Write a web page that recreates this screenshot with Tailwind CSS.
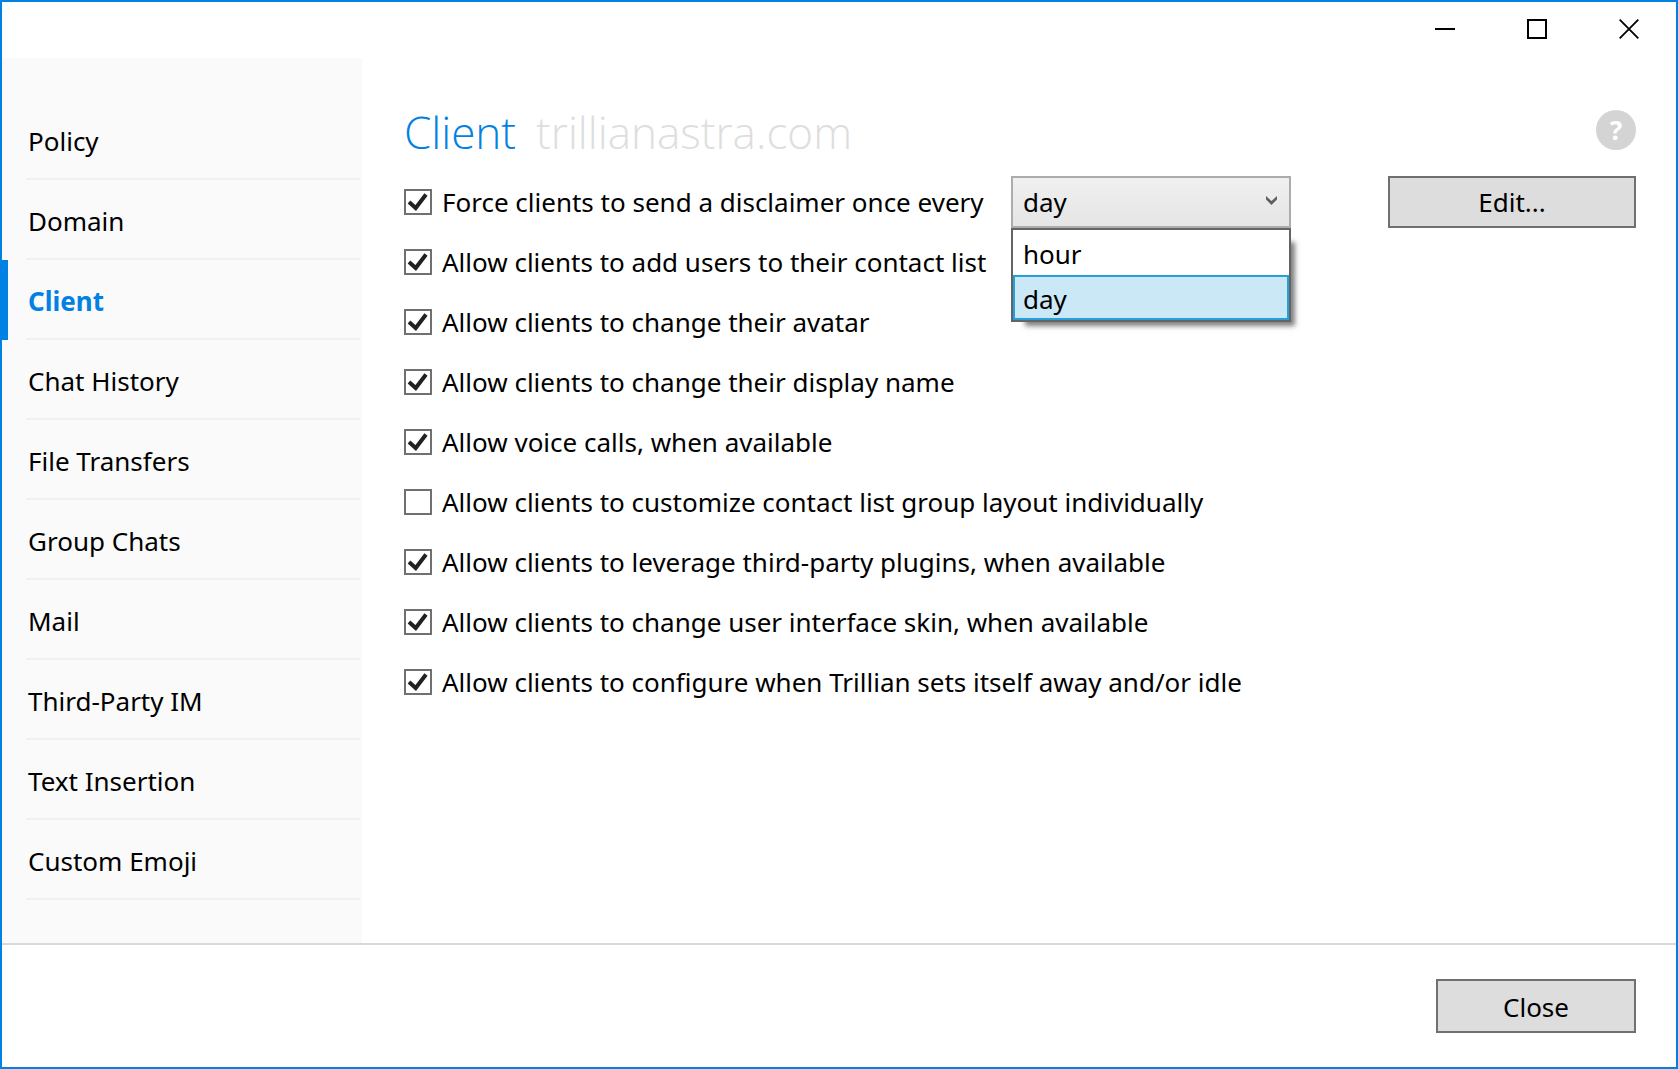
<!DOCTYPE html>
<html lang="en">
<head>
    <meta charset="UTF-8">
    <meta name="viewport" content="width=device-width, initial-scale=1.0">
    <title>Client - trillianastra.com</title>
    <script src="https://cdn.jsdelivr.net/npm/@tailwindcss/browser@4"></script>
    <style>
        body {
            font-family: 'Segoe UI', 'Noto Sans', 'Open Sans', sans-serif;
        }
        h1 {
            font-family: 'Segoe UI', 'Open Sans', sans-serif;
        }
        .check {
            appearance: none;
            flex-shrink: 0;
            width: 28px;
            height: 26px;
            border: 2px solid #707070;
            background: #fff;
        }
        .check:checked {
            background: #fff url("data:image/svg+xml,%3Csvg xmlns='http://www.w3.org/2000/svg' width='24' height='22'%3E%3Cpath d='M3 11 L9.7 17 L20 3.5' fill='none' stroke='%23212121' stroke-width='4'/%3E%3C/svg%3E") no-repeat center;
        }
    </style>
</head>
<body class="bg-white text-black text-[26px] leading-9">

    <div class="min-h-screen flex flex-col border-2 border-[#0081e3]">

        <!-- Title bar -->
        <header class="h-14 pr-px flex justify-end items-start">
            <button type="button" aria-label="Minimize" class="w-[92px] h-[54px] flex items-center justify-center">
                <svg width="20" height="20" viewBox="0 0 20 20"><path d="M0 10H20" stroke="#000" stroke-width="2"/></svg>
            </button>
            <button type="button" aria-label="Maximize" class="w-[92px] h-[54px] flex items-center justify-center">
                <svg width="20" height="20" viewBox="0 0 20 20"><path d="M1 1H19V19H1Z" fill="none" stroke="#000" stroke-width="2"/></svg>
            </button>
            <button type="button" aria-label="Close window" class="w-[92px] h-[54px] flex items-center justify-center">
                <svg width="20" height="20" viewBox="0 0 20 20"><path d="M0.7 0.7L19.3 19.3M19.3 0.7L0.7 19.3" stroke="#000" stroke-width="1.8"/></svg>
            </button>
        </header>

        <div class="flex-1 flex">
            <!-- Sidebar -->
            <nav class="w-[360px] shrink-0 bg-[#fafafa] pt-[42px] pb-[43px]">
                <ul>
                    <li class="pl-6 pr-0.5"><a href="#" class="h-20 pl-0.5 pt-1 flex items-center border-b-2 border-[#f0f0f0]">Policy</a></li>
                    <li class="pl-6 pr-0.5"><a href="#" class="h-20 pl-0.5 pt-1 flex items-center border-b-2 border-[#f0f0f0]">Domain</a></li>
                    <li class="pl-[18px] pr-0.5 border-l-6 border-[#0081e3]"><a href="#" aria-current="page" class="h-20 pl-0.5 pt-1 flex items-center border-b-2 border-[#f0f0f0] font-bold text-[#0081e3]">Client</a></li>
                    <li class="pl-6 pr-0.5"><a href="#" class="h-20 pl-0.5 pt-1 flex items-center border-b-2 border-[#f0f0f0]">Chat History</a></li>
                    <li class="pl-6 pr-0.5"><a href="#" class="h-20 pl-0.5 pt-1 flex items-center border-b-2 border-[#f0f0f0]">File Transfers</a></li>
                    <li class="pl-6 pr-0.5"><a href="#" class="h-20 pl-0.5 pt-1 flex items-center border-b-2 border-[#f0f0f0]">Group Chats</a></li>
                    <li class="pl-6 pr-0.5"><a href="#" class="h-20 pl-0.5 pt-1 flex items-center border-b-2 border-[#f0f0f0]">Mail</a></li>
                    <li class="pl-6 pr-0.5"><a href="#" class="h-20 pl-0.5 pt-1 flex items-center border-b-2 border-[#f0f0f0]">Third-Party IM</a></li>
                    <li class="pl-6 pr-0.5"><a href="#" class="h-20 pl-0.5 pt-1 flex items-center border-b-2 border-[#f0f0f0]">Text Insertion</a></li>
                    <li class="pl-6 pr-0.5"><a href="#" class="h-20 pl-0.5 pt-1 flex items-center border-b-2 border-[#f0f0f0]">Custom Emoji</a></li>
                </ul>
            </nav>

            <!-- Settings -->
            <main class="flex-1 pt-[52px] pl-[42px] pr-10">
                <div class="h-10 flex items-center mb-[22px]">
                    <h1 class="pt-1 flex gap-5 text-[44px] leading-10 font-light text-[#0081e3]">Client <span class="text-[#dedede]">trillianastra.com</span></h1>
                    <button type="button" aria-label="Help" class="ml-auto size-10 rounded-full bg-[#d4d4d4] text-white font-bold">?</button>
                </div>

                <div class="h-15 flex items-center">
                    <label class="w-[607px] flex items-center gap-2.5"><input type="checkbox" class="check" checked>Force clients to send a disclaimer once every</label>
                    <div class="relative w-70">
                        <select aria-label="Disclaimer interval" class="block w-full h-[52px] pl-2.5 appearance-none border-2 border-[#acacac] bg-linear-to-b from-[#f0f0f0] to-[#e5e5e5]">
                            <option>hour</option>
                            <option selected>day</option>
                        </select>
                        <svg class="absolute right-3.5 top-5 pointer-events-none" width="11" height="9" viewBox="0 0 11 9"><path d="M0 0L5.5 5L11 0V3.5L5.5 9L0 3.5Z" fill="#606060"/></svg>
                        <ul role="listbox" aria-label="Disclaimer interval options" class="absolute z-10 left-0 top-full w-full border-2 border-[#646464] bg-white shadow-[9px_9px_5px_-5px_rgba(0,0,0,0.5)]">
                            <li role="option" aria-selected="false" class="h-[45px] pl-2.5 pt-0.5 flex items-center">hour</li>
                            <li role="option" aria-selected="true" class="h-[45px] pl-2 pt-0.5 flex items-center border-2 border-[#26a0da] bg-[#cbe8f6]">day</li>
                        </ul>
                    </div>
                    <button type="button" class="ml-auto w-62 h-[52px] border-2 border-[#707070] bg-[#dddddd]">Edit...</button>
                </div>
                <label class="h-15 flex items-center gap-2.5"><input type="checkbox" class="check" checked>Allow clients to add users to their contact list</label>
                <label class="h-15 flex items-center gap-2.5"><input type="checkbox" class="check" checked>Allow clients to change their avatar</label>
                <label class="h-15 flex items-center gap-2.5"><input type="checkbox" class="check" checked>Allow clients to change their display name</label>
                <label class="h-15 flex items-center gap-2.5"><input type="checkbox" class="check" checked>Allow voice calls, when available</label>
                <label class="h-15 flex items-center gap-2.5"><input type="checkbox" class="check">Allow clients to customize contact list group layout individually</label>
                <label class="h-15 flex items-center gap-2.5"><input type="checkbox" class="check" checked>Allow clients to leverage third-party plugins, when available</label>
                <label class="h-15 flex items-center gap-2.5"><input type="checkbox" class="check" checked>Allow clients to change user interface skin, when available</label>
                <label class="h-15 flex items-center gap-2.5"><input type="checkbox" class="check" checked>Allow clients to configure when Trillian sets itself away and/or idle</label>
            </main>
        </div>

        <!-- Footer -->
        <footer class="border-t-2 border-[#d9d9d9] pt-[34px] pb-[34px] pr-10 flex justify-end">
            <button type="button" class="w-50 h-[54px] pt-0.5 border-2 border-[#707070] bg-[#dddddd]">Close</button>
        </footer>
    </div>

</body>
</html>
